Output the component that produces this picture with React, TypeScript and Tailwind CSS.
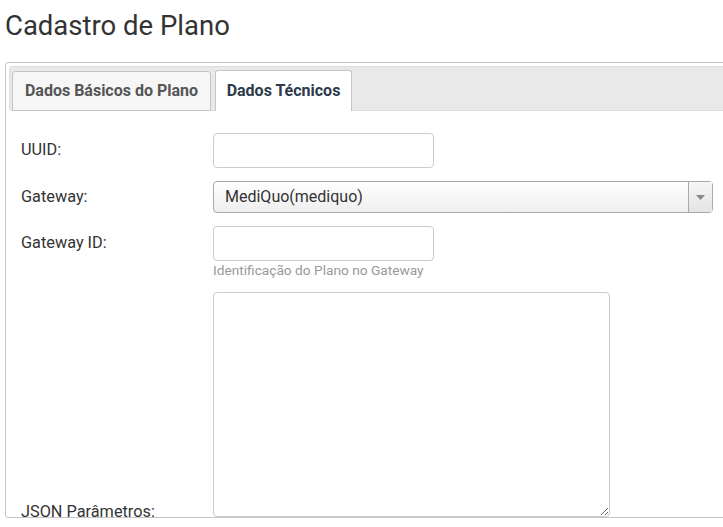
export default function App() {
    return (
        <div className="h-[527px] w-[723px] overflow-hidden bg-white font-['Roboto',sans-serif] text-[#333]">
            <h1 className="pt-[8px] pl-[5px] text-[27.5px] leading-[36px] font-normal text-[#333]">Cadastro de Plano</h1>

            <div className="mt-[18px] ml-[5px] w-[760px] rounded-[3px] border border-[#c5c5c5] p-[3px] pb-0">
                <div className="flex h-[45px] items-end gap-[3px] rounded-[3px] border border-[#dddddd] bg-[#e9e9e9] pl-[2px]">
                    <div className="-mb-px flex h-[40px] w-[199px] items-center justify-center rounded-t-[3px] border border-[#c5c5c5] bg-[#f6f6f6] text-[16px] font-bold text-[#555]">
                        Dados Básicos do Plano
                    </div>
                    <div className="-mb-px ml-px flex h-[41px] w-[137px] items-center justify-center rounded-t-[3px] border border-b-0 border-[#c5c5c5] bg-white pb-px text-[16px] font-bold text-[#2d3a4a]">
                        Dados Técnicos
                    </div>
                </div>

                <div className="flex flex-col gap-[13px] pt-[22px] pl-[12px] text-[16.3px]">
                    <div className="flex items-center">
                        <label className="w-[192px]">UUID:</label>
                        <input className="h-[35px] w-[221px] rounded-[4px] border border-[#ccc] bg-white px-3 outline-none" />
                    </div>

                    <div className="flex items-center">
                        <label className="w-[192px]">Gateway:</label>
                        <div className="flex h-[32px] w-[500px] items-center rounded-[4px] border border-[#aaa] bg-gradient-to-b from-white to-[#eeeeee]">
                            <span className="flex-1 pl-[11px] text-[16px] text-[#333]">MediQuo(mediquo)</span>
                            <span className="flex h-full w-[24px] items-center justify-center border-l border-[#aaa] bg-gradient-to-b from-[#f6f6f6] to-[#e4e4e4]">
                                <svg width="9" height="5" viewBox="0 0 9 5">
                                    <path d="M0 0h9L4.5 5z" fill="#888" />
                                </svg>
                            </span>
                        </div>
                    </div>

                    <div className="flex items-start">
                        <label className="flex h-[35px] w-[192px] items-center">Gateway ID:</label>
                        <div className="flex flex-col">
                            <input className="h-[35px] w-[221px] rounded-[4px] border border-[#ccc] bg-white px-3 outline-none" />
                            <span className="text-[13.7px] leading-[18px] text-[#999]">Identificação do Plano no Gateway</span>
                        </div>
                    </div>

                    <div className="flex items-end">
                        <label className="-mb-[6px] w-[192px] leading-[22px]">JSON Parâmetros:</label>
                        <textarea className="h-[225px] w-[397px] rounded-[4px] border border-[#ccc] bg-white outline-none" />
                    </div>
                </div>
            </div>
        </div>
    );
}
